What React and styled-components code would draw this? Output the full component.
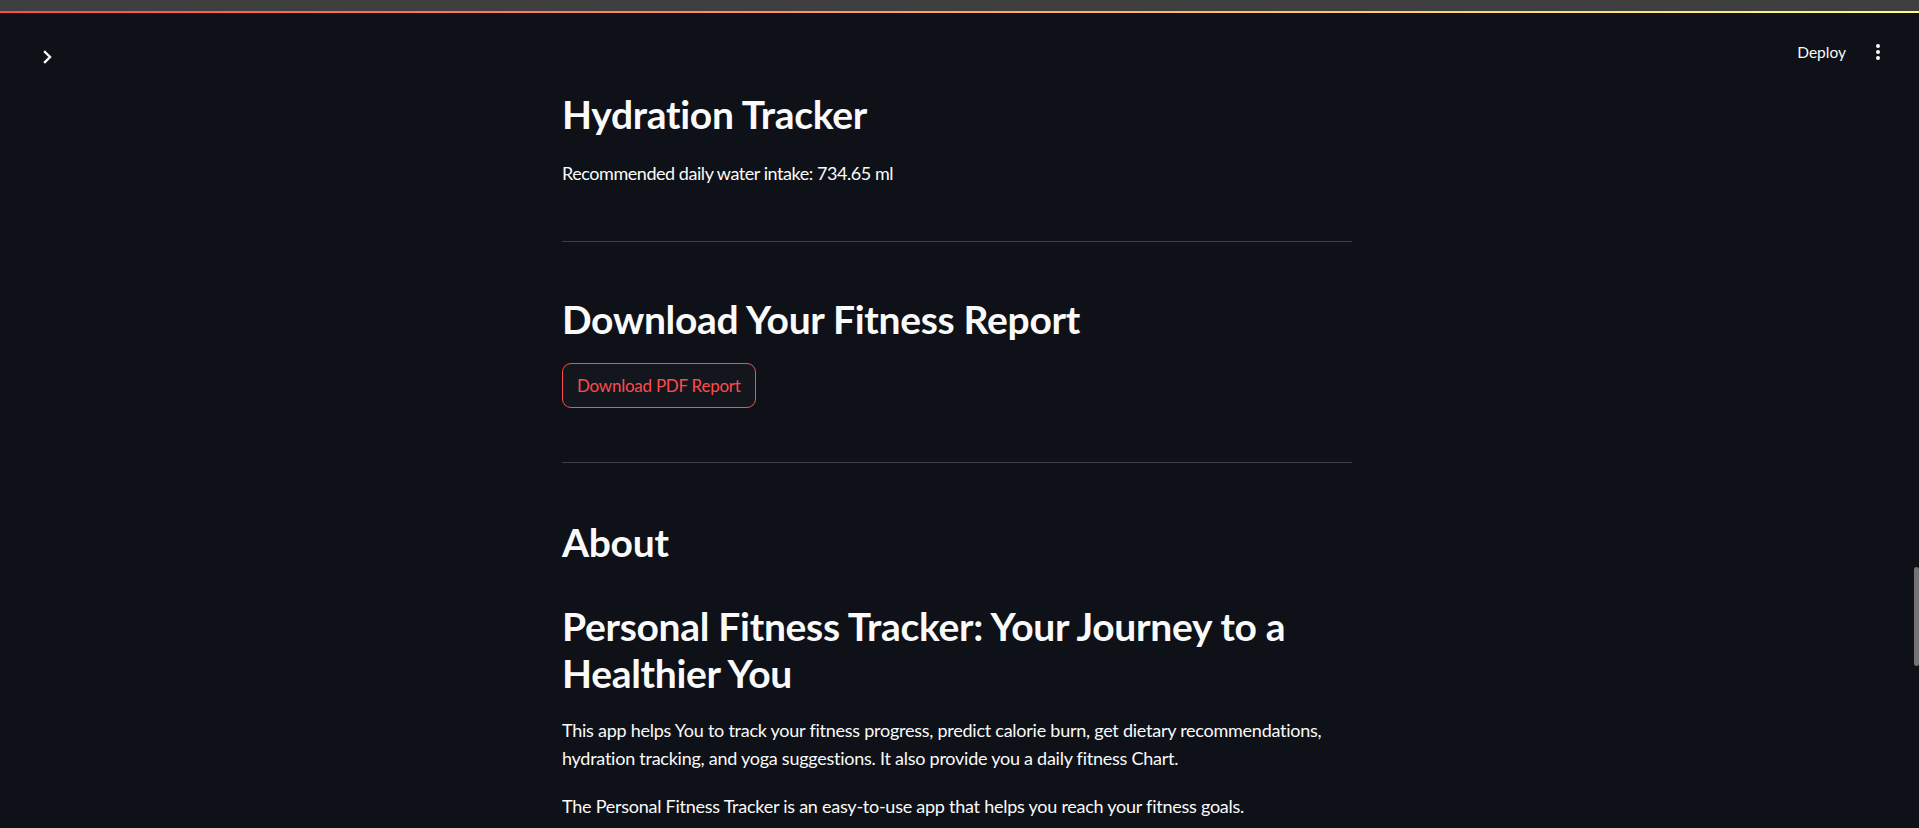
import React from 'react';
import styled, { createGlobalStyle } from 'styled-components';

const GlobalStyle = createGlobalStyle`
  html, body {
    margin: 0;
    padding: 0;
    background: #0e1117;
    overflow: hidden;
  }
  body {
    font-family: Lato, "Noto Sans", sans-serif;
    color: #fafafa;
  }
`;

const Page = styled.div`
  height: 828px;
  display: flex;
  flex-direction: column;
  background: #0e1117;
`;

const BrowserStrip = styled.div`
  height: 11px;
  background: #3f3f3f;
`;

const Decoration = styled.div`
  height: 2px;
  background: linear-gradient(90deg, #ff4b4b, #fffd80);
`;

const Body = styled.div`
  flex: 1;
  display: flex;
  min-height: 0;
`;

const Main = styled.div`
  flex: 1;
  display: flex;
  flex-direction: column;
  min-width: 0;
`;

const Header = styled.header`
  height: 64px;
  box-sizing: border-box;
  padding: 24px 32px 0 40px;
  display: flex;
  align-items: center;
  justify-content: space-between;
`;

const SidebarToggle = styled.button`
  width: 16px;
  height: 16px;
  padding: 0;
  border: none;
  background: none;
  color: #fafafa;
  display: flex;
  align-items: center;
  justify-content: center;
`;

const Toolbar = styled.div`
  display: flex;
  align-items: center;
  gap: 28px;
  margin-bottom: 10px;
`;

const DeployLink = styled.span`
  font-size: 15.5px;
  color: #fafafa;
`;

const Kebab = styled.div`
  display: flex;
  flex-direction: column;
  gap: 2px;
  padding: 0 2px;
`;

const Dot = styled.span`
  width: 4px;
  height: 4px;
  border-radius: 50%;
  background: #fafafa;
`;

const Column = styled.main`
  width: 790px;
  margin: 0 auto;
  display: flex;
  flex-direction: column;
  padding-top: 13px;
`;

const Heading = styled.h2`
  margin: ${(p) => p.$mt || 0}px 0 0;
  font-size: 39px;
  font-weight: 700;
  line-height: ${(p) => p.$lh || '48px'};
  letter-spacing: -0.3px;
  color: #fafafa;
`;

const Text = styled.p`
  margin: ${(p) => p.$mt || 0}px 0 0;
  font-size: 18px;
  line-height: 28.7px;
  letter-spacing: ${(p) => p.$ls || '-0.25px'};
  color: #fafafa;
`;

const Divider = styled.hr`
  margin: ${(p) => p.$mt || 0}px 0 0;
  border: none;
  height: 1px;
  background: rgba(250, 250, 250, 0.2);
`;

const DownloadButton = styled.button`
  align-self: flex-start;
  margin-top: ${(p) => p.$mt || 0}px;
  height: 45px;
  padding: 0 14px;
  border: 1px solid #ff4b4b;
  border-radius: 9px;
  background: #13161d;
  color: #ff4b4b;
  font-family: Lato, "Noto Sans", sans-serif;
  font-size: 17px;
  letter-spacing: -0.25px;
`;

const ScrollTrack = styled.div`
  width: 5px;
  display: flex;
  flex-direction: column;
`;

const ScrollThumb = styled.div`
  margin-top: 554px;
  height: 99px;
  border-radius: 3px;
  background: #737373;
`;

export default function App() {
  return (
    <Page>
      <GlobalStyle />
      <BrowserStrip />
      <Decoration />
      <Body>
        <Main>
          <Header>
            <SidebarToggle aria-label="Open sidebar">
              <svg width="12" height="14" viewBox="0 0 12 14" fill="none">
                <path d="M3 2l5 5-5 5" stroke="#fafafa" strokeWidth="2.4" strokeLinecap="square" />
              </svg>
            </SidebarToggle>
            <Toolbar>
              <DeployLink>Deploy</DeployLink>
              <Kebab>
                <Dot />
                <Dot />
                <Dot />
              </Kebab>
            </Toolbar>
          </Header>
          <Column>
            <Heading>Hydration Tracker</Heading>
            <Text $mt={21} $ls="-0.45px">Recommended daily water intake: 734.65 ml</Text>
            <Divider $mt={53} />
            <Heading $mt={53}>Download Your Fitness Report</Heading>
            <DownloadButton $mt={20}>Download PDF Report</DownloadButton>
            <Divider $mt={54} />
            <Heading $mt={55}>About</Heading>
            <Heading $mt={37} $lh="47.5px">
              Personal Fitness Tracker: Your Journey to a Healthier You
            </Heading>
            <Text $mt={18}>
              This app helps You to track your fitness progress, predict calorie burn, get dietary
              recommendations, hydration tracking, and yoga suggestions. It also provide you a daily
              fitness Chart.
            </Text>
            <Text $mt={19}>
              The Personal Fitness Tracker is an easy-to-use app that helps you reach your fitness goals.
            </Text>
          </Column>
        </Main>
        <ScrollTrack>
          <ScrollThumb />
        </ScrollTrack>
      </Body>
    </Page>
  );
}
